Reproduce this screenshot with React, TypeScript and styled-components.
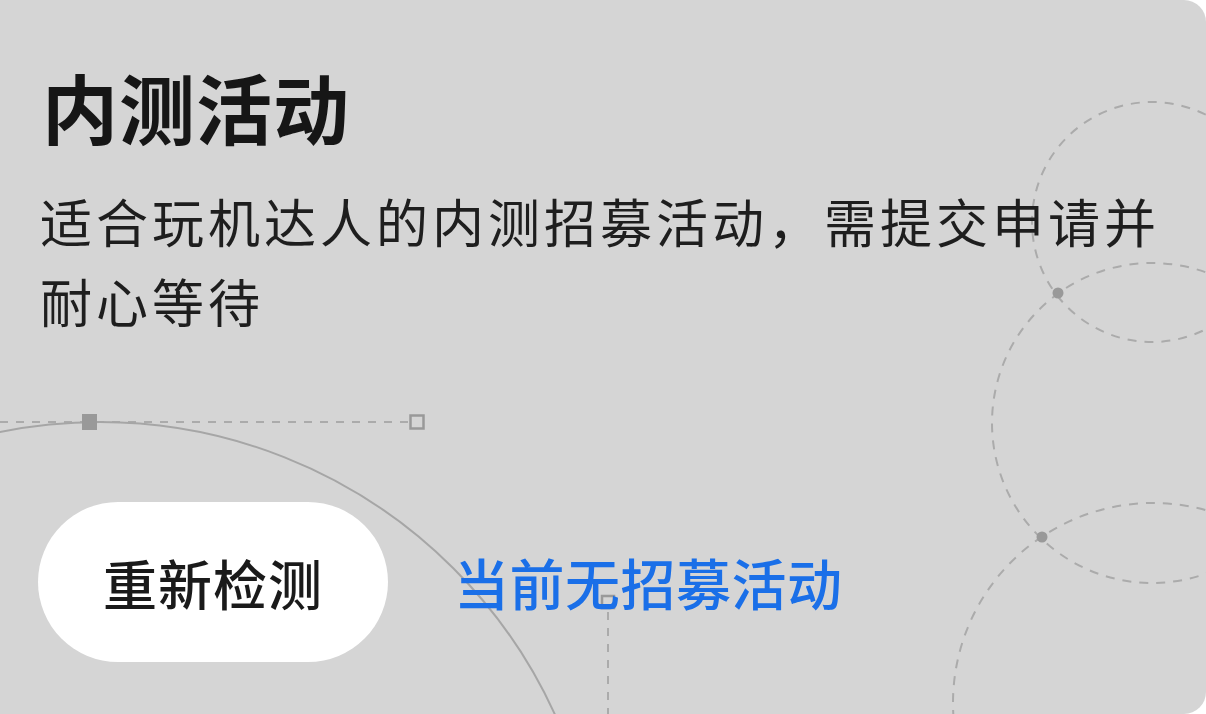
import React from "react";
import styled, { createGlobalStyle } from "styled-components";

const GlobalStyle = createGlobalStyle`
  html, body {
    margin: 0;
    padding: 0;
    background: #ffffff;
  }
  body {
    font-family: "Noto Sans CJK SC", "Noto Sans", sans-serif;
  }
`;

const Card = styled.section`
  position: relative;
  width: 1206px;
  height: 714px;
  background: #d5d5d5;
  border-radius: 0 22px 22px 0;
  overflow: hidden;
  box-sizing: border-box;
  display: flex;
  flex-direction: column;
  padding: 60px 0 52px 40px;
`;

const Decor = styled.svg`
  position: absolute;
  inset: 0;
  width: 100%;
  height: 100%;
  pointer-events: none;
`;

const Title = styled.h1`
  position: relative;
  margin: 0;
  padding-left: 2px;
  font-size: 76px;
  line-height: 92px;
  font-weight: 700;
  color: #161616;
  letter-spacing: 1px;
`;

const Description = styled.p`
  position: relative;
  margin: 29px 0 0 0;
  width: 1160px;
  font-size: 52px;
  line-height: 80px;
  font-weight: 400;
  color: #1e1e1e;
  letter-spacing: 4px;
`;

const ActionRow = styled.div`
  position: relative;
  margin-top: auto;
  display: flex;
  align-items: center;
  gap: 66px;
  margin-left: -2px;
`;

const PillButton = styled.button`
  width: 350px;
  height: 160px;
  border: none;
  border-radius: 80px;
  background: #ffffff;
  color: #1a1a1a;
  font-family: "Noto Sans CJK SC", "Noto Sans", sans-serif;
  font-size: 54px;
  font-weight: 500;
  letter-spacing: 1px;
  padding: 0;
  cursor: pointer;
`;

const StatusText = styled.span`
  font-size: 55px;
  font-weight: 500;
  color: #1a6fe8;
  letter-spacing: 0.5px;
  padding-bottom: 2px;
`;

const dashed = "#ababab";
const solid = "#a6a6a6";
const node = "#999999";

export default function App() {
  return (
    <>
      <GlobalStyle />
      <Card>
        <Decor viewBox="0 0 1206 714" xmlns="http://www.w3.org/2000/svg">
          <line x1="0" y1="422" x2="408" y2="422" stroke={dashed} strokeWidth="2" strokeDasharray="8 8" />
          <circle cx="100" cy="922" r="500" fill="none" stroke={solid} strokeWidth="2" />
          <rect x="82" y="414" width="15" height="16" fill={node} />
          <rect x="410.5" y="415.5" width="13" height="13" fill="none" stroke={node} strokeWidth="2.5" />
          <line x1="608" y1="612" x2="608" y2="714" stroke={dashed} strokeWidth="2" strokeDasharray="8 8" />
          <rect x="602" y="596" width="12" height="12" fill="none" stroke={node} strokeWidth="2.5" />
          <circle cx="1152" cy="222" r="120" fill="none" stroke={dashed} strokeWidth="2" strokeDasharray="9 8" />
          <circle cx="1152" cy="423" r="160" fill="none" stroke={dashed} strokeWidth="2" strokeDasharray="9 8" />
          <circle cx="1153" cy="703" r="200" fill="none" stroke={dashed} strokeWidth="2" strokeDasharray="9 8" />
          <circle cx="1058" cy="293" r="5.5" fill={node} />
          <circle cx="1042" cy="537" r="5.5" fill={node} />
        </Decor>
        <Title>内测活动</Title>
        <Description>适合玩机达人的内测招募活动，需提交申请并耐心等待</Description>
        <ActionRow>
          <PillButton type="button">重新检测</PillButton>
          <StatusText>当前无招募活动</StatusText>
        </ActionRow>
      </Card>
    </>
  );
}
